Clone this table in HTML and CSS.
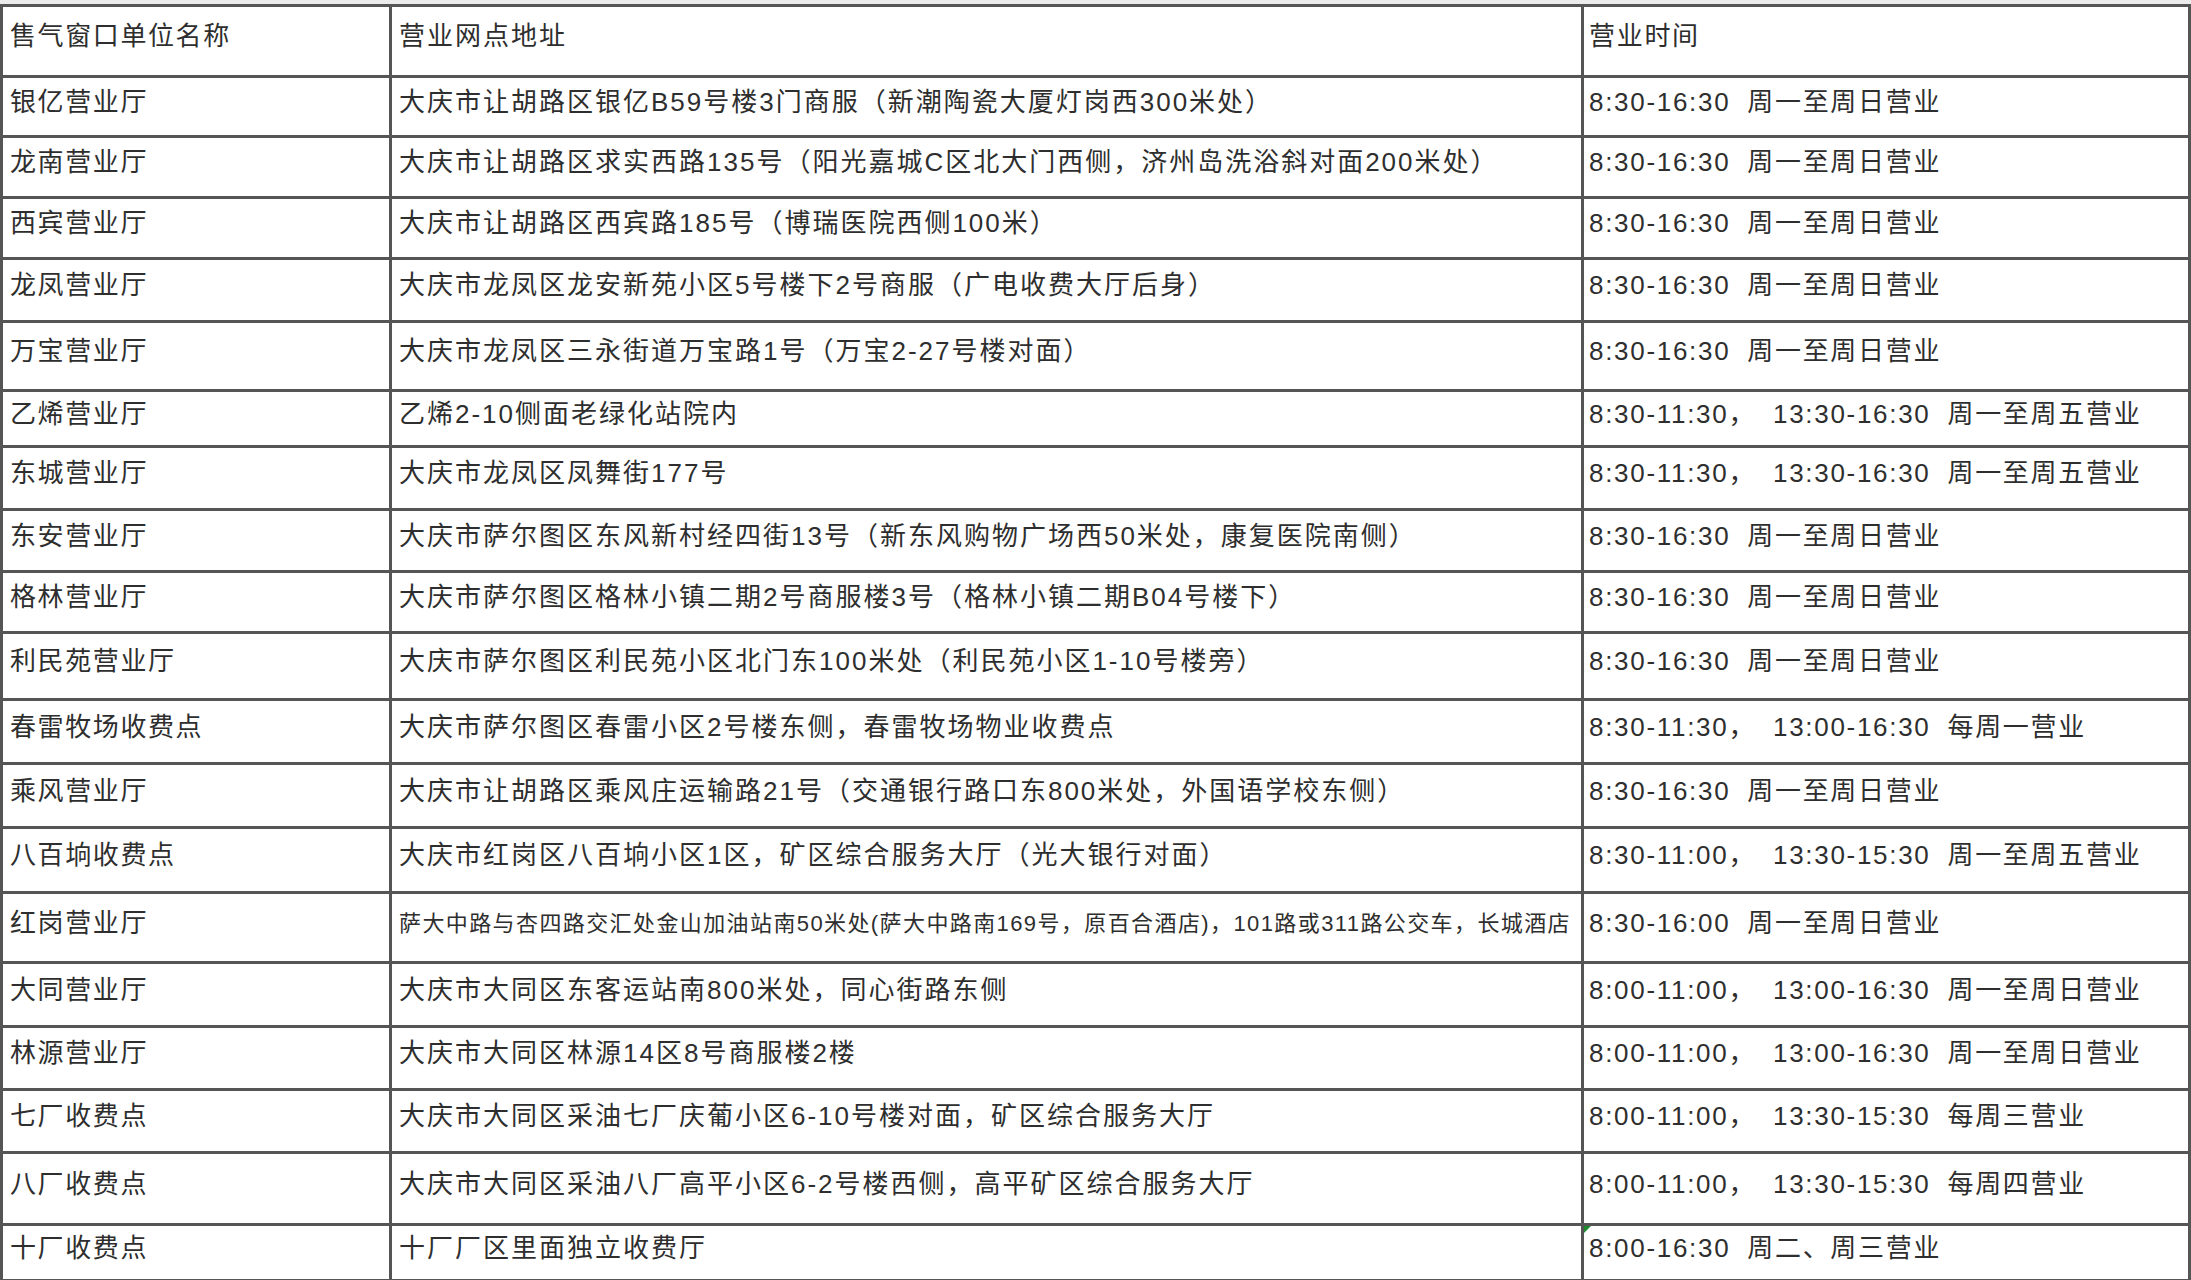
FILE: index.html
```html
<!DOCTYPE html>
<html lang="zh-CN">
<head>
<meta charset="utf-8">
<title>售气窗口</title>
<link rel="stylesheet" href="styles.css">
</head>
<body>
<div class="sheet">
  <div class="row head">
    <div class="cell">售气窗口单位名称</div>
    <div class="cell">营业网点地址</div>
    <div class="cell">营业时间</div>
  </div>
  <div class="row"><div class="cell">银亿营业厅</div><div class="cell">大庆市让胡路区银亿B59号楼3门商服（新潮陶瓷大厦灯岗西300米处）</div><div class="cell">8:30-16:30 周一至周日营业</div></div>
  <div class="row"><div class="cell">龙南营业厅</div><div class="cell">大庆市让胡路区求实西路135号（阳光嘉城C区北大门西侧，济州岛洗浴斜对面200米处）</div><div class="cell">8:30-16:30 周一至周日营业</div></div>
  <div class="row"><div class="cell">西宾营业厅</div><div class="cell">大庆市让胡路区西宾路185号（博瑞医院西侧100米）</div><div class="cell">8:30-16:30 周一至周日营业</div></div>
  <div class="row"><div class="cell">龙凤营业厅</div><div class="cell">大庆市龙凤区龙安新苑小区5号楼下2号商服（广电收费大厅后身）</div><div class="cell">8:30-16:30 周一至周日营业</div></div>
  <div class="row"><div class="cell">万宝营业厅</div><div class="cell">大庆市龙凤区三永街道万宝路1号（万宝2-27号楼对面）</div><div class="cell">8:30-16:30 周一至周日营业</div></div>
  <div class="row"><div class="cell">乙烯营业厅</div><div class="cell">乙烯2-10侧面老绿化站院内</div><div class="cell">8:30-11:30， 13:30-16:30 周一至周五营业</div></div>
  <div class="row"><div class="cell">东城营业厅</div><div class="cell">大庆市龙凤区凤舞街177号</div><div class="cell">8:30-11:30， 13:30-16:30 周一至周五营业</div></div>
  <div class="row"><div class="cell">东安营业厅</div><div class="cell">大庆市萨尔图区东风新村经四街13号（新东风购物广场西50米处，康复医院南侧）</div><div class="cell">8:30-16:30 周一至周日营业</div></div>
  <div class="row"><div class="cell">格林营业厅</div><div class="cell">大庆市萨尔图区格林小镇二期2号商服楼3号（格林小镇二期B04号楼下）</div><div class="cell">8:30-16:30 周一至周日营业</div></div>
  <div class="row"><div class="cell">利民苑营业厅</div><div class="cell">大庆市萨尔图区利民苑小区北门东100米处（利民苑小区1-10号楼旁）</div><div class="cell">8:30-16:30 周一至周日营业</div></div>
  <div class="row"><div class="cell">春雷牧场收费点</div><div class="cell">大庆市萨尔图区春雷小区2号楼东侧，春雷牧场物业收费点</div><div class="cell">8:30-11:30， 13:00-16:30 每周一营业</div></div>
  <div class="row"><div class="cell">乘风营业厅</div><div class="cell">大庆市让胡路区乘风庄运输路21号（交通银行路口东800米处，外国语学校东侧）</div><div class="cell">8:30-16:30 周一至周日营业</div></div>
  <div class="row"><div class="cell">八百垧收费点</div><div class="cell">大庆市红岗区八百垧小区1区，矿区综合服务大厅（光大银行对面）</div><div class="cell">8:30-11:00， 13:30-15:30 周一至周五营业</div></div>
  <div class="row"><div class="cell">红岗营业厅</div><div class="cell small">萨大中路与杏四路交汇处金山加油站南50米处(萨大中路南169号，原百合酒店)，101路或311路公交车，长城酒店</div><div class="cell">8:30-16:00 周一至周日营业</div></div>
  <div class="row"><div class="cell">大同营业厅</div><div class="cell">大庆市大同区东客运站南800米处，同心街路东侧</div><div class="cell">8:00-11:00， 13:00-16:30 周一至周日营业</div></div>
  <div class="row"><div class="cell">林源营业厅</div><div class="cell">大庆市大同区林源14区8号商服楼2楼</div><div class="cell">8:00-11:00， 13:00-16:30 周一至周日营业</div></div>
  <div class="row"><div class="cell">七厂收费点</div><div class="cell">大庆市大同区采油七厂庆葡小区6-10号楼对面，矿区综合服务大厅</div><div class="cell">8:00-11:00， 13:30-15:30 每周三营业</div></div>
  <div class="row"><div class="cell">八厂收费点</div><div class="cell">大庆市大同区采油八厂高平小区6-2号楼西侧，高平矿区综合服务大厅</div><div class="cell">8:00-11:00， 13:30-15:30 每周四营业</div></div>
  <div class="row"><div class="cell">十厂收费点</div><div class="cell">十厂厂区里面独立收费厅</div><div class="cell flagged">8:00-16:30 周二、周三营业<span class="flag"></span></div></div>
</div>
</body>
</html>
```
FILE: styles.css
```css
html, body {
  margin: 0;
  padding: 0;
  background: #ffffff;
}
body {
  width: 2191px;
  height: 1280px;
  overflow: hidden;
  padding-top: 4px;
  background: linear-gradient(#ececec, #ececec) top / 100% 4px no-repeat, #ffffff;
  box-sizing: border-box;
  font-family: "Liberation Sans", "Noto Sans CJK SC", sans-serif;
  color: #2e2e2e;
}
.sheet {
  width: 2191px;
  box-sizing: border-box;
  border-top: 3px solid #555555;
  border-left: 3px solid #555555;
  border-right: 3px solid #555555;
}
.row {
  display: grid;
  grid-template-columns: 389px 1192px 1fr;
  box-sizing: border-box;
  height: 63px;
  border-bottom: 3px solid #555555;
}
.cell {
  display: flex;
  align-items: center;
  box-sizing: border-box;
  padding: 0 0 10px 7px;
  font-size: 26px;
  letter-spacing: 2px;
  word-spacing: 8px;
  line-height: 1;
  white-space: pre;
  overflow: hidden;
  position: relative;
}
.cell:nth-child(1), .cell:nth-child(2) {
  border-right: 3px solid #555555;
}
.cell:nth-child(1) {
  letter-spacing: 1.6px;
}
.cell:nth-child(3) {
  padding-left: 5px;
  letter-spacing: 1.7px;
}
.cell.small {
  font-size: 22px;
  letter-spacing: 1.4px;
  word-spacing: 0;
  padding-bottom: 7px;
}
.flag {
  position: absolute;
  left: 0;
  top: 0;
  width: 0;
  height: 0;
  border-top: 7px solid #1f8a2e;
  border-right: 7px solid transparent;
}
.row:nth-child(1) { height: 71px; }
.row:nth-child(2) { height: 60px; }
.row:nth-child(3) { height: 61px; }
.row:nth-child(4) { height: 61px; }
.row:nth-child(5) { height: 63px; }
.row:nth-child(6) { height: 69px; }
.row:nth-child(7) { height: 56px; }
.row:nth-child(8) { height: 63px; }
.row:nth-child(9) { height: 62px; }
.row:nth-child(10) { height: 61px; }
.row:nth-child(11) { height: 67px; }
.row:nth-child(12) { height: 64px; }
.row:nth-child(13) { height: 64px; }
.row:nth-child(14) { height: 65px; }
.row:nth-child(15) { height: 70px; }
.row:nth-child(16) { height: 64px; }
.row:nth-child(17) { height: 63px; }
.row:nth-child(18) { height: 63px; }
.row:nth-child(19) { height: 72px; }
.row:nth-child(20) { height: 56px; }
```
